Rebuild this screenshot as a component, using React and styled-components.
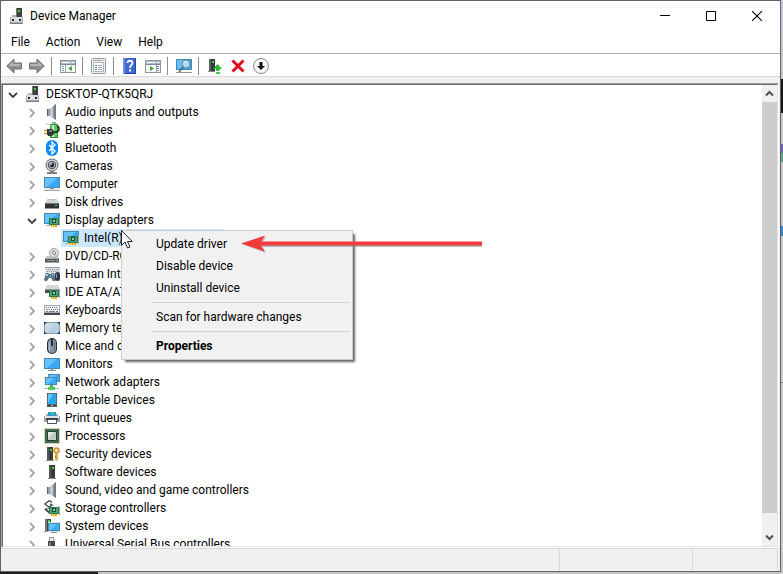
import React from "react";
import styled, { createGlobalStyle, css } from "styled-components";

const GlobalStyle = createGlobalStyle`
  *, *::before, *::after { box-sizing: border-box; }
  body {
    margin: 0;
    background: #c8c8c8;
    color: #000;
    font: 12px/18px Roboto, "Segoe UI", sans-serif;
    overflow: hidden;
  }
  button { font: inherit; color: inherit; }
`;

const Desktop = styled.div`
  height: 100vh;
  display: flex;
  padding: 0 2px 2px 0;
  background:
    linear-gradient(#1b1f23, #1b1f23) left bottom / 98px 2px no-repeat,
    linear-gradient(
      #c3c8d4 0 38px, #c8c8c8 38px 79px, #14181c 79px 113px, #c8c8c8 113px 144px,
      #7464ae 144px 153px, #61a286 153px 162px, #c8c8c8 162px 226px,
      #3d84c2 226px 236px, #cccccc 236px 382px, #777777 382px 383px, #c8c8c8 383px
    ) right top / 2px 100% no-repeat,
    #c4c6c4;
`;

const Window = styled.main`
  flex: 1;
  min-width: 0;
  display: flex;
  flex-direction: column;
  background: #f0f0f0;
  border: 1px solid #656266;
`;

const TitleBar = styled.header`
  display: flex;
  align-items: center;
  height: 30px;
  padding-left: 8px;
  background: #fff;
`;

const Title = styled.h1`
  flex: 1;
  margin: 0 0 0 5px;
  font-size: 12px;
  font-weight: 400;
`;

const CaptionButton = styled.button`
  width: 46px;
  height: 30px;
  display: grid;
  place-items: center;
  padding: 0;
  border: 0;
  background: transparent;
`;

const MenuBar = styled.nav`
  display: flex;
  height: 22px;
  padding-left: 2px;
  background: #fff;
`;

const MenuBarButton = styled.button`
  padding: 0 8px;
  border: 0;
  background: transparent;
`;

const ToolBar = styled.div`
  display: flex;
  align-items: center;
  height: 24px;
  padding-left: 1px;
  background: #fff;
  border-top: 1px solid #b0b1b8;
  border-bottom: 1px solid #dadada;
`;

const ToolButton = styled.button`
  width: 23px;
  height: 22px;
  display: grid;
  place-items: center;
  padding: 2px 0 0;
  border: 0;
  background: transparent;
`;

const ToolSeparator = styled.span`
  width: 1px;
  height: 18px;
  margin: 1px 4px 0 3px;
  background: #8d8d8d;
`;

const TreePane = styled.section`
  flex: 1;
  min-height: 0;
  display: flex;
  margin: 6px 1px 0 0;
  border: 1px solid;
  border-color: #a0a0a0 #fff #fff #a0a0a0;
`;

const TreeInner = styled.div`
  flex: 1;
  min-width: 0;
  display: flex;
  background: #fff;
  border: 1px solid;
  border-color: #696969 #e3e3e3 #e3e3e3 #696969;
`;

const TreeList = styled.ul`
  flex: 1;
  min-width: 0;
  margin: 0;
  padding: 0;
  list-style: none;
  overflow: hidden;
`;

const TreeRow = styled.li`
  position: relative;
  display: flex;
  align-items: center;
  height: 18px;
  padding-left: ${(p) => p.$level * 19}px;
`;

const Expander = styled.button`
  width: 20px;
  height: 18px;
  display: grid;
  place-items: center;
  padding: 2px 0 0;
  border: 0;
  background: transparent;
`;

const ExpanderSpace = styled.span`
  width: 20px;
`;

const TreeItem = styled.span`
  display: flex;
  align-items: center;
  gap: 5px;
  height: 18px;
  padding: 0 2px;
  white-space: nowrap;
  ${(p) => p.$selected && css`background: #cce8ff;`}
`;

const ScrollBar = styled.div`
  width: 15px;
  display: flex;
  flex-direction: column;
  background: #f0f0f0;
`;

const ScrollButton = styled.button`
  height: 17px;
  display: grid;
  place-items: center;
  padding: 0;
  border: 0;
  background: #f0f0f0;
`;

const ScrollTrack = styled.div`
  flex: 1;
  padding-bottom: 16px;
`;

const ScrollThumb = styled.div`
  height: 100%;
  background: #cdcdcd;
`;

const StatusBar = styled.footer`
  display: flex;
  height: 23px;
  padding: 1px 2px 1px 0;
  border-top: 1px solid #d7d7d7;
`;

const StatusCell = styled.div`
  flex: ${(p) => (p.$width ? `0 0 ${p.$width}px` : "1")};
  border-right: 1px solid #d7d7d7;
`;

const ContextMenu = styled.div`
  position: absolute;
  z-index: 1;
  top: 1px;
  left: 118px;
  width: 232px;
  padding: 2px;
  background: #f1f1f1;
  border: 1px solid #cccccc;
  box-shadow: 3px 3px 2px -1px rgba(0, 0, 0, 0.6);
`;

const ContextItem = styled.button`
  display: block;
  width: 100%;
  height: 22px;
  padding: 0 0 0 32px;
  border: 0;
  background: transparent;
  text-align: left;
  font-weight: ${(p) => (p.$strong ? 700 : 400)};
`;

const ContextRule = styled.hr`
  height: 1px;
  margin: 3px 0 3px 28px;
  border: 0;
  background: #d2d2d2;
`;

const Pointer = styled.svg`
  position: absolute;
  z-index: 2;
  top: 0;
  left: 118px;
`;

const Callout = styled.svg`
  position: absolute;
  z-index: 2;
  top: 5px;
  left: 238px;
`;

const Svg = ({ children, size = 16, height, ...rest }) => (
  <svg
    width={size}
    height={height || size}
    viewBox={`0 0 ${size} ${height || size}`}
    fill="none"
    aria-hidden="true"
    {...rest}
  >
    {children}
  </svg>
);

/* Shared fragments for the device drawings */

const Tower = ({ x = 5, y = 1, h = 13 }) => (
  <g>
    <path d={`M${x} ${y}h6v${h}h-6z`} fill="#3b3b3b" />
    <path d={`M${x} ${y}h2v${h}h-2z`} fill="#565656" />
    <path d={`M${x + 3} ${y + 2}h2v2h-2z`} fill="#2ee62e" />
    <path d={`M${x - 1} ${y + h}h8v1h-8z`} fill="#8b8b8b" />
  </g>
);

const Screen = ({ x, y, w, h }) => (
  <g>
    <rect x={x} y={y} width={w} height={h} fill="#4a87ad" />
    <rect x={x + 1} y={y + 1} width={w - 2} height={h - 2} fill="#3aa9f5" />
    <path d={`M${x + 1} ${y + 1}h${w - 4}L${x + 3} ${y + h - 1}H${x + 1}z`} fill="#64c1fb" />
  </g>
);

const Card = ({ x, y }) => (
  <g>
    <rect x={x} y={y} width="10" height="7" fill="#2c7a50" />
    <rect x={x + 1} y={y + 1} width="8" height="5" fill="#4aa374" />
    <rect x={x + 3} y={y + 1} width="4" height="4" fill="#1c4a36" />
    <rect x={x + 4} y={y + 2} width="2" height="2" fill="#8fd0a4" />
    <rect x={x + 2} y={y + 7} width="6" height="2" fill="#f3a414" />
    <path d={`M${x + 3.5} ${y + 7}v2M${x + 5.5} ${y + 7}v2`} stroke="#ffd45c" />
    <path d={`M${x + 10.5} ${y - 1}v9`} stroke="#a3aaa6" />
  </g>
);

const Keys = ({ y = 5 }) => (
  <g>
    <rect x="1" y={y} width="15" height="7" fill="#dfe2e5" />
    <rect x="1" y={y} width="15" height="1" fill="#9aa0a6" />
    <path d={`M2 ${y + 2.5}h13`} stroke="#8a9097" strokeDasharray="1 1" />
    <path d={`M3 ${y + 4.5}h12`} stroke="#8a9097" strokeDasharray="1 1" />
  </g>
);

const Speaker = () => (
  <Svg>
    <path d="M3 5h3v7H3z" fill="#59636d" />
    <path d="M4 5h2v7H4z" fill="#939da6" />
    <path d="M6 5l6-5v16l-6-4z" fill="#8c949c" />
    <path d="M6 5l3-2v11l-3-2z" fill="#c4cbd1" />
    <path d="M10 1.500l2-1.500v16l-2-1.500z" fill="#757d86" />
  </Svg>
);

const icons = {
  root: (
    <Svg>
      <path d="M7 0h6v10H7z" fill="#3f4040" />
      <path d="M7 0h1v10H7z" fill="#777" />
      <path d="M9 2h2v2H9z" fill="#30df38" />
      <path d="M3 7h4v2H3z" fill="#aeb0b3" />
      <path d="M1 9h13v6H1z" fill="#a7a8ac" />
      <path d="M2 9h11v5H2z" fill="#dcdde1" />
      <path d="M3 11h2v2H3zM10 11h2v2h-2z" fill="#25272a" />
      <path d="M1 15h13v1H1z" fill="#7d7e82" />
    </Svg>
  ),
  audio: <Speaker />,
  battery: (
    <Svg>
      <path d="M6 2h8v14H6z" fill="#3b8b3d" />
      <path d="M8 0h4v2H8z" fill="#9fae9f" />
      <path d="M7 3h6v12H7z" fill="#55cc55" />
      <path d="M8 3h2v12H8z" fill="#c8f7c2" />
      <path d="M1 3c2-2 4-1 6 1" stroke="#c2c8c6" />
      <path d="M13 4c3 1 3 7-3 6" stroke="#222" strokeWidth="1.500" />
      <path d="M3 7h5l2 2v3l-2 2H4l-1-2z" fill="#323536" />
      <path d="M5 8h3v2H5z" fill="#777d7d" />
      <path d="M0 8.500h3M0 11.500h3" stroke="#d59b25" strokeWidth="1.500" />
    </Svg>
  ),
  bluetooth: (
    <Svg>
      <rect x="2" y="0" width="12" height="16" rx="6" fill="#0688f5" />
      <path d="M5 5l6 6-3 3V2l3 3-6 6" stroke="#fff" strokeWidth="1.300" />
    </Svg>
  ),
  camera: (
    <Svg>
      <circle cx="8" cy="7" r="6.500" fill="#6d7375" />
      <circle cx="8" cy="7" r="5.500" fill="#dcdfdf" />
      <circle cx="8" cy="7" r="4.300" fill="#50575a" />
      <circle cx="8" cy="7" r="3.200" fill="#a6acaf" />
      <circle cx="8" cy="7" r="2.200" fill="#23292c" />
      <circle cx="7" cy="6" r="1" fill="#d7e4e8" />
      <path d="M6 13h4v1h3v2H3v-2h3z" fill="#7d8284" />
    </Svg>
  ),
  computer: (
    <Svg>
      <Screen x={0} y={1} w={16} h={11} />
      <path d="M6 12h4v1H6z" fill="#7e8c96" />
      <path d="M0 14h16v1H0z" fill="#a2abb3" />
      <path d="M1 13h14v1H1z" fill="#dce1e5" />
    </Svg>
  ),
  disk: (
    <Svg>
      <path d="M3 5h10l2 4H1z" fill="#d4d5d6" />
      <path d="M4 5h8v1H4z" fill="#bdbfc1" />
      <path d="M1 9h14v5H1z" fill="#323334" />
      <path d="M1 9h14v1H1z" fill="#777" />
      <path d="M11 11h2v1h-2z" fill="#42e45f" />
      <path d="M1 14h14v1H1z" fill="#929394" />
    </Svg>
  ),
  display: (
    <Svg>
      <Screen x={0} y={1} w={16} h={11} />
      <path d="M2 13h4v1H2z" fill="#9ba8b0" />
      <Card x={5} y={6} />
    </Svg>
  ),
  dvd: (
    <Svg>
      <path d="M2 8h12l1 3H1z" fill="#c4c6c8" />
      <circle cx="10" cy="5" r="5" fill="#aaadb0" />
      <circle cx="10" cy="5" r="4" fill="#dfe1e2" />
      <path d="M10 5L7 2a4 4 0 014-1zM10 5l4 2a5 5 0 01-3 2z" fill="#bfc7ca" />
      <circle cx="10" cy="5" r="1.500" fill="#fff" stroke="#888" />
      <path d="M1 10h14v4H1z" fill="#56585a" />
      <path d="M1 10h14v1H1z" fill="#aaa" />
      <path d="M3 12.500h8" stroke="#939597" />
      <path d="M12 12h2v1h-2z" fill="#4cdf62" />
      <path d="M1 14h14v1H1z" fill="#a5a5a5" />
    </Svg>
  ),
  human: (
    <Svg>
      <Keys y={1} />
      <path d="M2 7h2l1 1h2l1-1h2l2 7-1 1H9l-2-3H5l-2 3H1l-1-1z" fill="#5d7286" />
      <path d="M2 8h2v2H2zM8 8h1v2H8z" fill="#a9c7dc" />
      <path d="M5 10h2v1H5z" fill="#3bcbe7" />
      <rect x="11" y="6" width="5" height="9" rx="2.500" fill="#2f3945" />
      <path d="M12 8h1v4h-1z" fill="#8a9dad" />
    </Svg>
  ),
  ide: (
    <Svg>
      <path d="M3 1h11l2 4H1z" fill="#d6d7d8" />
      <path d="M1 5h15v4H1z" fill="#494b4c" />
      <path d="M1 5h15v1H1z" fill="#999" />
      <Card x={5} y={6} />
    </Svg>
  ),
  keyboard: (
    <Svg>
      <rect y="3" width="16" height="10" fill="#a4abb1" />
      <rect x="1" y="4" width="14" height="6" fill="#eceef0" />
      <path d="M2 5.500h12M3 7.500h11" stroke="#757c83" strokeDasharray="1 1" />
      <path d="M2 9.500h2m1 0h6m1 0h2" stroke="#757c83" />
      <rect y="11" width="16" height="2" fill="#444a50" />
    </Svg>
  ),
  memory: (
    <Svg>
      <rect y="2" width="16" height="12" fill="#8b9aa6" />
      <rect x="1" y="3" width="14" height="10" fill="#b7d0e2" />
      <path d="M1 3h9L3 13H1z" fill="#c9dce9" />
      <path d="M0 2h3L0 5zM16 2v3l-3-3zM0 14v-3l3 3zM16 14h-3l3-3z" fill="#303a41" />
    </Svg>
  ),
  mouse: (
    <Svg>
      <rect x="3" y="0" width="10" height="16" rx="5" fill="#252c35" />
      <rect x="4" y="1" width="8" height="14" rx="4" fill="#8797a9" />
      <path d="M5 5h1v7H5z" fill="#c5ced8" />
      <path d="M7 1h2v7H7z" fill="#27303a" />
      <path d="M10 4h1v9h-1z" fill="#59697c" />
    </Svg>
  ),
  monitor: (
    <Svg>
      <Screen x={0} y={2} w={16} h={11} />
      <path d="M7 13h2v1H7zM4 14h8v1H4z" fill="#86949f" />
    </Svg>
  ),
  network: (
    <Svg>
      <Screen x={4} y={0} w={12} h={8} />
      <rect x="0" y="3" width="13" height="9" fill="#e1edf4" />
      <Screen x={1} y={3} w={12} h={8} />
      <path d="M6 11h3v3H6z" fill="#43ba48" />
      <path d="M0 14h15v1H0z" fill="#aeb4b3" />
      <path d="M4 13h7v3H4z" fill="#55ca55" />
    </Svg>
  ),
  portable: (
    <Svg>
      <rect x="3" y="1" width="10" height="14" fill="#596570" />
      <rect x="4" y="2" width="8" height="10" fill="#27a6f3" />
      <path d="M4 2h5L4 11z" fill="#6ac6ff" />
      <path d="M4 13h8v1H4z" fill="#323b43" />
      <path d="M7 13h2v1H7z" fill="#b3c0c8" />
    </Svg>
  ),
  printer: (
    <Svg>
      <path d="M4 2h8v4H4z" fill="#2396dc" />
      <path d="M7 2h3v3H7z" fill="#43c96f" />
      <path d="M2 4h2v2H2zM12 4h2v2h-2z" fill="#9ea5a9" />
      <path d="M0 6h16v6H0z" fill="#a3a8ad" />
      <path d="M1 6h14v2H1z" fill="#e2e5e7" />
      <path d="M2 8h12v2H2z" fill="#363b3f" />
      <path d="M3.500 9.500h9v4h-9z" fill="#fafafa" stroke="#4f5457" />
    </Svg>
  ),
  processor: (
    <Svg>
      <rect x=".500" y=".500" width="15" height="15" stroke="#b7a264" strokeDasharray="1 1" />
      <rect x="1" y="1" width="14" height="14" fill="#3c6b52" />
      <rect x="3" y="3" width="10" height="10" fill="#234434" />
      <rect x="4" y="4" width="8" height="8" fill="#c6cac7" />
      <path d="M4 4h6l-6 6z" fill="#e6e8e6" />
    </Svg>
  ),
  security: (
    <Svg>
      <Tower x={3} y={1} h={13} />
      <circle cx="12.500" cy="4.500" r="2.300" stroke="#cf9b36" strokeWidth="2" />
      <path d="M11 7h3v7l-1 1-2-1z" fill="#e0ad45" />
      <path d="M11 10h1v2h-1z" fill="#bf861f" />
    </Svg>
  ),
  software: (
    <Svg>
      <Tower x={5} y={1} h={13} />
    </Svg>
  ),
  sound: <Speaker />,
  storage: (
    <Svg>
      <path d="M8 2.500L5.500.500 1 4l4 3 3-2-2-1" stroke="#555b5c" strokeWidth="1.500" />
      <path d="M1 9l5 4h4" stroke="#414747" strokeWidth="2" />
      <path d="M1 8.500h5l3 2" stroke="#858b8b" />
      <Card x={5} y={7} />
    </Svg>
  ),
  system: (
    <Svg>
      <path d="M1 1h6v13H1z" fill="#47494a" />
      <path d="M1 1h2v13H1z" fill="#777" />
      <path d="M4 2h2v2H4z" fill="#3ada45" />
      <path d="M0 13h6v1H0z" fill="#909394" />
      <rect x="4" y="4" width="12" height="10" fill="#d5e3eb" />
      <Screen x={4} y={5} w={12} h={8} />
      <path d="M7 14h6v1H7z" fill="#84929b" />
    </Svg>
  ),
  usb: (
    <Svg>
      <path d="M5 1h5v5H5z" fill="#999da0" />
      <path d="M6 2h3v3H6z" fill="#ebeced" />
      <path d="M4 5h7v9l-2 2H6l-2-2z" fill="#45484b" />
      <path d="M5 6h2v8H5z" fill="#74787b" />
    </Svg>
  ),
};

const ToolArrow = ({ flip }) => (
  <Svg>
    <g transform={flip ? "translate(16 0) scale(-1 1)" : undefined}>
      <path d="M.700 8l7.300-7v4h7.500v6H8v4z" fill="#8e8e8e" stroke="#6f6f6f" />
      <path d="M2.300 8L7 3.500V6h7.500v2z" fill="#b4b4b4" />
    </g>
  </Svg>
);

const PanelIcon = ({ right }) => (
  <Svg>
    <rect x=".500" y="2.500" width="15" height="12" fill="#f5f7f8" stroke="#8e969d" />
    <path d="M1 3h14v3H1z" fill="#b4bbc3" />
    <path d="M2 4.500h8M12 4.500h2" stroke="#fff" />
    <path d="M1 6.500h14" stroke="#7f8993" />
    <path d={right ? "M11.500 7v7" : "M5.500 7v7"} stroke="#9ca4aa" />
    <path
      d={right ? "M12 8.500h2M12 10.500h2M12 12.500h2" : "M2 8.500h2M2 10.500h2M2 12.500h2"}
      stroke="#7794b4"
    />
    <path d={right ? "M5 8v5l4-2.500z" : "M12 8v5l-4-2.500z"} fill="#41a832" />
  </Svg>
);

const tools = [
  ["Back", <ToolArrow />],
  ["Forward", <ToolArrow flip />],
  null,
  ["Show or hide console tree", <PanelIcon />],
  null,
  [
    "Properties",
    <Svg>
      <rect x=".500" y=".500" width="14" height="15" rx="1" fill="#eceef0" stroke="#9299a0" />
      <path d="M2 2.500h9M12 2.500h1" stroke="#a0a7ae" />
      <path d="M2.500 4.500h10v9h-10z" fill="#fff" stroke="#b0b6bb" />
      <path d="M4 7.500h2M4 9.500h2M4 11.500h2" stroke="#5585ba" />
      <path d="M7 7.500h4M7 9.500h4M7 11.500h4" stroke="#a3a9ae" />
    </Svg>,
  ],
  null,
  [
    "Help",
    <Svg>
      <rect x="1" y="0" width="13" height="16" fill="#2145ae" />
      <path d="M3 0h10v15H3z" fill="#4167d1" />
      <path d="M1 0h2v16H1z" fill="#6f8ee0" />
      <path d="M5.500 5C5.500 2 10.500 2 10.500 5c0 2-2.500 2-2.500 5" stroke="#fff" strokeWidth="1.800" />
      <path d="M7 11.500h2v2H7z" fill="#fff" />
    </Svg>,
  ],
  ["Action pane", <PanelIcon right />],
  null,
  [
    "Scan for hardware changes",
    <Svg>
      <Screen x={0} y={1} w={16} h={11} />
      <path d="M0 14h16v1H0z" fill="#8b97a0" />
      <circle cx="10" cy="6" r="4" fill="#a6ddfb" stroke="#71808b" />
      <path d="M7.500 9L3 14" stroke="#56636d" strokeWidth="1.500" />
      <path d="M8 5c.500-1.500 2-2 3-1" stroke="#fff" />
    </Svg>,
  ],
  null,
  [
    "Update driver",
    <Svg>
      <path d="M2 1h6v12H2z" fill="#373939" />
      <path d="M2 1h2v12H2z" fill="#646666" />
      <path d="M5 3h2v2H5z" fill="#3ae449" />
      <path d="M1 13h7v1H1z" fill="#868989" />
      <path d="M10.500 6l4.500 5h-2.500v1H9v-1H6z" fill="#29b833" />
      <path d="M9 12h4v1H9zM9 14h4v2H9z" fill="#48ca4e" />
    </Svg>,
  ],
  [
    "Uninstall device",
    <Svg>
      <path d="M2.500 2.500l11 11M13.500 2.500l-11 11" stroke="#dc0d19" strokeWidth="3" />
    </Svg>,
  ],
  [
    "Disable device",
    <Svg>
      <circle cx="8" cy="8" r="7.500" fill="#f7f7f7" stroke="#8a8a8a" />
      <path d="M6.500 4h3v4H12l-4 4-4-4h2.500z" fill="#111" />
    </Svg>,
  ],
];

const devices = [
  { level: 0, icon: "root", label: "DESKTOP-QTK5QRJ", state: "open" },
  { level: 1, icon: "audio", label: "Audio inputs and outputs" },
  { level: 1, icon: "battery", label: "Batteries" },
  { level: 1, icon: "bluetooth", label: "Bluetooth" },
  { level: 1, icon: "camera", label: "Cameras" },
  { level: 1, icon: "computer", label: "Computer" },
  { level: 1, icon: "disk", label: "Disk drives" },
  { level: 1, icon: "display", label: "Display adapters", state: "open" },
  { level: 2, icon: "display", label: "Intel(R) UHD Graphics 620", state: "leaf", selected: true },
  { level: 1, icon: "dvd", label: "DVD/CD-ROM drives" },
  { level: 1, icon: "human", label: "Human Interface Devices" },
  { level: 1, icon: "ide", label: "IDE ATA/ATAPI controllers" },
  { level: 1, icon: "keyboard", label: "Keyboards" },
  { level: 1, icon: "memory", label: "Memory technology devices" },
  { level: 1, icon: "mouse", label: "Mice and other pointing devices" },
  { level: 1, icon: "monitor", label: "Monitors" },
  { level: 1, icon: "network", label: "Network adapters" },
  { level: 1, icon: "portable", label: "Portable Devices" },
  { level: 1, icon: "printer", label: "Print queues" },
  { level: 1, icon: "processor", label: "Processors" },
  { level: 1, icon: "security", label: "Security devices" },
  { level: 1, icon: "software", label: "Software devices" },
  { level: 1, icon: "sound", label: "Sound, video and game controllers" },
  { level: 1, icon: "storage", label: "Storage controllers" },
  { level: 1, icon: "system", label: "System devices" },
  { level: 1, icon: "usb", label: "Universal Serial Bus controllers" },
];

const Chevron = ({ open }) => (
  <Svg size={10}>
    {open ? (
      <path d="M1 3l4 4 4-4" stroke="#404040" strokeWidth="1.800" />
    ) : (
      <path d="M3 1l4 4-4 4" stroke="#a6a6a6" strokeWidth="1.800" />
    )}
  </Svg>
);

const DeviceMenu = () => (
  <>
    <ContextMenu role="menu">
      <ContextItem role="menuitem">Update driver</ContextItem>
      <ContextItem role="menuitem">Disable device</ContextItem>
      <ContextItem role="menuitem">Uninstall device</ContextItem>
      <ContextRule />
      <ContextItem role="menuitem">Scan for hardware changes</ContextItem>
      <ContextRule />
      <ContextItem role="menuitem" $strong>Properties</ContextItem>
    </ContextMenu>
    <Callout width="242" height="20" viewBox="0 0 242 20" aria-hidden="true">
      <path d="M2 10.500L25 3l-4 6h220v4H21l4 6z" fill="#777" opacity=".5" />
      <path d="M0 9.500L24 1.500l-4 6h221v4H20l4 6z" fill="#f23c3c" />
    </Callout>
    <Pointer width="13" height="20" viewBox="0 0 13 20" aria-hidden="true">
      <path d="M.500 1.500v15l3.500-3.500 2.500 6 2.500-1-2.500-5.500h4.800z" fill="#fff" stroke="#222236" />
    </Pointer>
  </>
);

export default function App() {
  return (
    <Desktop>
      <GlobalStyle />
      <Window>
        <TitleBar>
          {icons.root}
          <Title>Device Manager</Title>
          <CaptionButton aria-label="Minimize">
            <Svg size={10}><path d="M0 4.500h10" stroke="#000" /></Svg>
          </CaptionButton>
          <CaptionButton aria-label="Maximize">
            <Svg size={10}><path d="M.500.500h9v9h-9z" stroke="#000" /></Svg>
          </CaptionButton>
          <CaptionButton aria-label="Close">
            <Svg size={10}><path d="M0 0l10 10M10 0L0 10" stroke="#000" strokeWidth="1.100" /></Svg>
          </CaptionButton>
        </TitleBar>
        <MenuBar>
          {["File", "Action", "View", "Help"].map((name) => (
            <MenuBarButton key={name}>{name}</MenuBarButton>
          ))}
        </MenuBar>
        <ToolBar role="toolbar">
          {tools.map((tool, i) =>
            tool ? (
              <ToolButton key={i} aria-label={tool[0]}>{tool[1]}</ToolButton>
            ) : (
              <ToolSeparator key={i} />
            )
          )}
        </ToolBar>
        <TreePane>
          <TreeInner>
            <TreeList role="tree">
              {devices.map((d) => (
                <TreeRow key={d.label} $level={d.level} role="treeitem">
                  {d.state === "leaf" ? (
                    <ExpanderSpace />
                  ) : (
                    <Expander aria-label={`Toggle ${d.label}`}>
                      <Chevron open={d.state === "open"} />
                    </Expander>
                  )}
                  <TreeItem $selected={d.selected}>
                    {icons[d.icon]}
                    {d.label}
                  </TreeItem>
                  {d.selected && <DeviceMenu />}
                </TreeRow>
              ))}
            </TreeList>
            <ScrollBar>
              <ScrollButton aria-label="Scroll up">
                <Svg size={9}><path d="M1 6.500L4.500 3 8 6.500" stroke="#505050" strokeWidth="2" /></Svg>
              </ScrollButton>
              <ScrollTrack><ScrollThumb /></ScrollTrack>
              <ScrollButton aria-label="Scroll down">
                <Svg size={9}><path d="M1 2.500L4.500 6 8 2.500" stroke="#505050" strokeWidth="2" /></Svg>
              </ScrollButton>
            </ScrollBar>
          </TreeInner>
        </TreePane>
        <StatusBar>
          <StatusCell />
          <StatusCell $width={133} />
          <StatusCell $width={85} />
        </StatusBar>
      </Window>
    </Desktop>
  );
}
